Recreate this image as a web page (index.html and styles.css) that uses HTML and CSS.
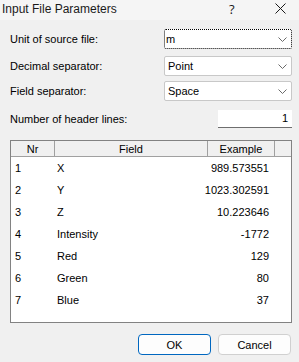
FILE: index.html
```html
<!DOCTYPE html>
<html lang="en">
<head>
  <meta charset="UTF-8" />
  <meta name="viewport" content="width=device-width, initial-scale=1.0" />
  <title>Input File Parameters</title>
  <link rel="stylesheet" href="styles.css">
</head>
<body>
  <div class="window">
    <div class="titlebar">
      <span class="title">Input File Parameters</span>
      <span class="help">?</span>
      <span class="close">
        <svg width="11" height="11" viewBox="0 0 11 11"><path d="M0.5 0.5 L10.5 10.5 M10.5 0.5 L0.5 10.5" stroke="#1a1a1a" stroke-width="1" fill="none"/></svg>
      </span>
    </div>

    <div class="content">
      <div class="field-row row-unit">
        <label>Unit of source file:</label>
        <div class="combo focused">
          <span>m</span>
          <svg class="chevron" width="9" height="5" viewBox="0 0 9 5"><path d="M0.5 0.5 L4.5 4.5 L8.5 0.5" stroke="#6a6a6a" fill="none"/></svg>
        </div>
      </div>
      <div class="field-row row-decimal">
        <label>Decimal separator:</label>
        <div class="combo">
          <span>Point</span>
          <svg class="chevron" width="9" height="5" viewBox="0 0 9 5"><path d="M0.5 0.5 L4.5 4.5 L8.5 0.5" stroke="#6a6a6a" fill="none"/></svg>
        </div>
      </div>
      <div class="field-row row-field">
        <label>Field separator:</label>
        <div class="combo">
          <span>Space</span>
          <svg class="chevron" width="9" height="5" viewBox="0 0 9 5"><path d="M0.5 0.5 L4.5 4.5 L8.5 0.5" stroke="#6a6a6a" fill="none"/></svg>
        </div>
      </div>
      <div class="field-row row-header">
        <label>Number of header lines:</label>
        <div class="textbox">1</div>
      </div>

      <div class="table">
        <div class="thead">
          <div class="th">Nr</div>
          <div class="th">Field</div>
          <div class="th">Example</div>
          <div class="th filler"></div>
        </div>
        <div class="tr"><span class="nr">1</span><span class="name">X</span><span class="example">989.573551</span></div>
        <div class="tr"><span class="nr">2</span><span class="name">Y</span><span class="example">1023.302591</span></div>
        <div class="tr"><span class="nr">3</span><span class="name">Z</span><span class="example">10.223646</span></div>
        <div class="tr"><span class="nr">4</span><span class="name">Intensity</span><span class="example">-1772</span></div>
        <div class="tr"><span class="nr">5</span><span class="name">Red</span><span class="example">129</span></div>
        <div class="tr"><span class="nr">6</span><span class="name">Green</span><span class="example">80</span></div>
        <div class="tr"><span class="nr">7</span><span class="name">Blue</span><span class="example">37</span></div>
      </div>

      <div class="buttons">
        <button class="btn default">OK</button>
        <button class="btn">Cancel</button>
      </div>
    </div>
  </div>
</body>
</html>
```

FILE: styles.css
```css
body {
  margin: 0;
  background-color: #f0f0f0;
  font-family: "Liberation Sans", Arial, sans-serif;
  font-size: 11px;
  color: #000;
}
.window {
  width: 299px;
  height: 362px;
  overflow: hidden;
}
.titlebar {
  height: 20px;
  background-color: #f5f5f5;
  display: flex;
  align-items: center;
  padding-left: 2px;
  color: #1a1a1a;
}
.title {
  font-size: 12px;
  flex: 1;
  margin-top: -2px;
}
.help {
  font-family: "Open Sans", sans-serif;
  font-size: 13px;
  width: 46px;
  margin-top: -3px;
}
.close {
  width: 24px;
  display: flex;
  margin-top: -4px;
}
.content {
  padding: 0 7px 0 10px;
}
.field-row {
  display: flex;
  align-items: center;
  justify-content: space-between;
}
.row-unit {
  margin-top: 9px;
}
.row-decimal {
  margin-top: 7px;
}
.row-field {
  margin-top: 5px;
}
.row-header {
  margin-top: 9px;
}
.combo {
  width: 128px;
  height: 20px;
  box-sizing: border-box;
  background-color: #fff;
  border: 1px solid #c8c8c8;
  border-radius: 2px;
  display: flex;
  align-items: center;
  justify-content: space-between;
  padding: 0 4px 0 3px;
}
.combo.focused {
  border: 1px dotted #000;
  padding-left: 1px;
}
.chevron {
  display: block;
}
.textbox {
  width: 74px;
  height: 18px;
  box-sizing: border-box;
  background-color: #fff;
  border-bottom: 1px solid #6e6e6e;
  text-align: right;
  padding: 2px 4px 0 0;
}
.table {
  margin-top: 12px;
  width: 282px;
  height: 183px;
  box-sizing: border-box;
  border: 1px solid #828282;
  background-color: #fff;
}
.thead {
  display: grid;
  grid-template-columns: 44px 153px 67px 1fr;
  height: 16px;
  box-sizing: border-box;
  background-color: #f0f0f0;
  border-bottom: 1px solid #a0a0a0;
}
.th {
  border-right: 1px solid #a0a0a0;
  text-align: center;
  line-height: 16px;
}
.th.filler {
  border-right: none;
}
.tr {
  display: grid;
  grid-template-columns: 46px 130px 82px;
  height: 22px;
  align-items: center;
}
.tr:first-of-type {
  margin-top: 1px;
}
.nr {
  padding-left: 4px;
}
.example {
  text-align: right;
}
.buttons {
  display: flex;
  justify-content: flex-end;
  gap: 7px;
  margin-top: 11px;
  padding-right: 1px;
}
.btn {
  width: 73px;
  height: 21px;
  font-family: "Liberation Sans", Arial, sans-serif;
  font-size: 11px;
  color: #000;
  background-color: #fdfdfd;
  border: 1px solid #d0d0d0;
  border-radius: 4px;
  padding: 0;
}
.btn.default {
  border: 1px solid #0067c0;
}
```
